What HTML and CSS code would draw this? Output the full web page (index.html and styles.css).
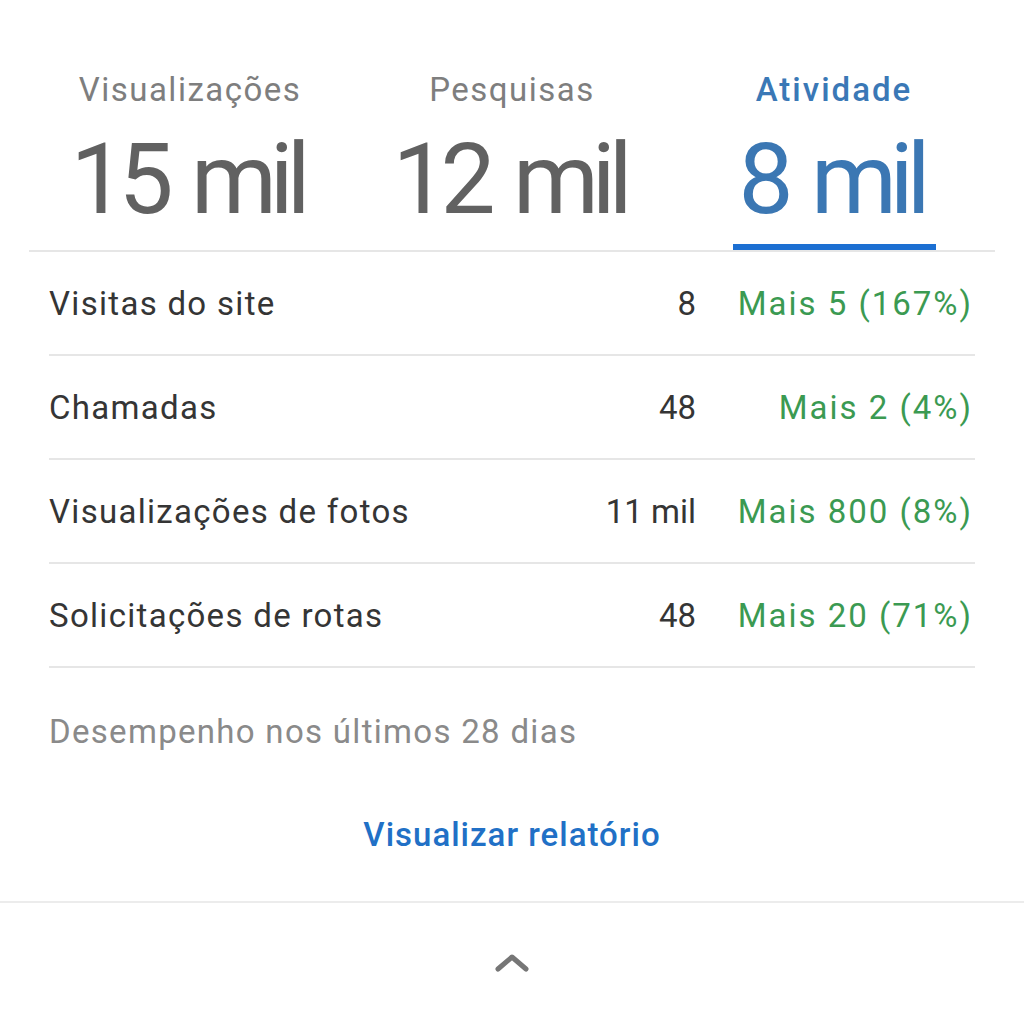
FILE: index.html
```html
<!DOCTYPE html>
<html lang="pt">

<head>
    <meta charset="UTF-8" />
    <meta name="viewport" content="width=device-width, initial-scale=1.0" />
    <title>Desempenho</title>
    <link rel="stylesheet" href="styles.css">
</head>

<body>
    <div class="card">
        <div class="tabs">
            <div class="tab">
                <div class="tab-label">Visualizações</div>
                <div class="tab-value">15 mil</div>
            </div>
            <div class="tab">
                <div class="tab-label">Pesquisas</div>
                <div class="tab-value">12 mil</div>
            </div>
            <div class="tab active">
                <div class="tab-label">Atividade</div>
                <div class="tab-value">8 mil</div>
            </div>
        </div>

        <div class="rows">
            <div class="row">
                <span class="row-name">Visitas do site</span>
                <span class="row-count">8</span>
                <span class="row-change">Mais 5 (167%)</span>
            </div>
            <div class="row">
                <span class="row-name">Chamadas</span>
                <span class="row-count">48</span>
                <span class="row-change">Mais 2 (4%)</span>
            </div>
            <div class="row">
                <span class="row-name">Visualizações de fotos</span>
                <span class="row-count">11 mil</span>
                <span class="row-change">Mais 800 (8%)</span>
            </div>
            <div class="row">
                <span class="row-name">Solicitações de rotas</span>
                <span class="row-count">48</span>
                <span class="row-change">Mais 20 (71%)</span>
            </div>
        </div>

        <p class="period">Desempenho nos últimos 28 dias</p>

        <a class="report" href="#">Visualizar relatório</a>
    </div>

    <div class="footer">
        <svg class="chevron" width="36" height="22" viewBox="0 0 36 22">
            <path d="M4 17 L18 5 L32 17" fill="none" stroke="#767676" stroke-width="5" stroke-linecap="round" stroke-linejoin="round" />
        </svg>
    </div>
</body>

</html>
```

FILE: styles.css
```css
body {
    font-family: Roboto, "Noto Sans", Arial, sans-serif;
    margin: 0;
    padding: 0;
    background-color: #fff;
    color: #333;
}

.card {
    padding: 0 49px;
}

.tabs {
    display: grid;
    grid-template-columns: repeat(3, 1fr);
    margin: 0 -20px;
    padding-top: 70px;
    border-bottom: 2px solid #e6e6e6;
}

.tab {
    display: flex;
    flex-direction: column;
    align-items: center;
    color: #616161;
}

.tab-label {
    font-size: 33px;
    line-height: 40px;
    color: #7e7e7e;
    letter-spacing: 1.5px;
}

.tab-value {
    font-size: 98px;
    line-height: 124px;
    letter-spacing: -7px;
    word-spacing: 7px;
    padding: 8px 12px 2px 6px;
    border-bottom: 6px solid transparent;
}

.tab.active .tab-label {
    color: #3a78b6;
    font-weight: 500;
    letter-spacing: 2px;
}

.tab.active .tab-value {
    color: #3b77b3;
    border-bottom-color: #1c6fd2;
}

.row {
    display: flex;
    align-items: center;
    height: 102px;
    border-bottom: 2px solid #e6e6e6;
    font-size: 33px;
    letter-spacing: 1.3px;
}

.row-name {
    flex: 1;
    color: #353535;
}

.row-count {
    color: #353535;
    text-align: right;
    letter-spacing: 0;
}

.row-change {
    width: 277px;
    padding-right: 2px;
    text-align: right;
    letter-spacing: 2px;
    color: #3b9a52;
}

.period {
    margin: 0;
    padding-top: 44px;
    font-size: 33px;
    line-height: 40px;
    letter-spacing: 1.3px;
    color: #8a8a8a;
}

.report {
    display: block;
    text-align: center;
    margin-top: 63px;
    padding-bottom: 46px;
    font-size: 33px;
    line-height: 40px;
    letter-spacing: 1px;
    font-weight: 500;
    color: #2170c6;
    text-decoration: none;
}

.footer {
    border-top: 2px solid #ececec;
    display: flex;
    justify-content: center;
    padding-top: 49px;
}
```
